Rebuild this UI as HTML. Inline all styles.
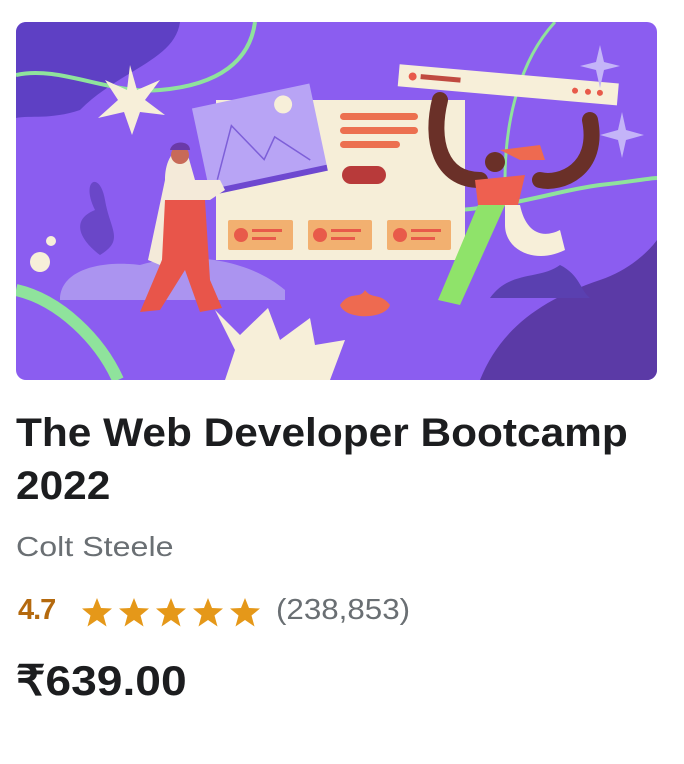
<!DOCTYPE html>
<html><head><meta charset="utf-8"><style>
html,body{margin:0;padding:0;background:#fff;width:684px;height:764px;overflow:hidden;font-family:"Liberation Sans",Arial,sans-serif}
.card{position:absolute;left:16px;top:22px;width:641px;height:358px;border-radius:10px;overflow:hidden}
.s{transform-origin:0 0;white-space:nowrap;position:absolute}
.t{left:16px;top:407px;font-size:40px;font-weight:bold;color:#1c1d1f;line-height:53px;transform:scaleX(1.06)}
.a{left:16px;top:531px;font-size:28px;color:#6a6f73;transform:scaleX(1.15)}
.p{left:16px;top:656px;font-size:42px;font-weight:bold;color:#1c1d1f;transform:scaleX(1.1)}
</style></head><body>
<div class="card">
<svg width="641" height="358" viewBox="16 22 641 358" xmlns="http://www.w3.org/2000/svg">
<rect x="16" y="22" width="641" height="358" fill="#8b5df0"/>
<path d="M16 22 H180 C175 60 120 70 80 110 C50 120 30 115 16 118Z" fill="#5e40c4"/>
<path d="M480 380 C500 330 540 300 600 280 C630 270 650 250 657 240 V380Z" fill="#5b3aa6"/>
<path d="M16 75 C60 65 110 95 160 90 C220 85 250 60 255 22" stroke="#8fe39c" stroke-width="4" fill="none"/>
<path d="M555 22 C520 60 505 120 505 180" stroke="#8fe39c" stroke-width="3" fill="none"/>
<path d="M460 210 C520 205 560 190 600 185 C630 182 650 178 657 178" stroke="#8fe39c" stroke-width="4" fill="none"/>
<path d="M16 290 C60 300 100 340 118 380" stroke="#8fe39c" stroke-width="12" fill="none"/>
<path d="M60 300 C60 270 100 260 140 265 C190 250 250 260 285 290 L285 300Z" fill="#ab94f0"/>
<path d="M95 210 C80 180 100 170 105 200 C110 230 125 240 100 255 C80 240 70 220 95 210Z" fill="#6a47c8"/>
<path d="M130 65 L137 90 L160 80 L145 100 L165 115 L140 112 L132 135 L124 112 L98 118 L118 100 L105 80 L127 90Z" fill="#f7efd9"/>
<circle cx="40" cy="262" r="10" fill="#f7efd9"/><circle cx="51" cy="241" r="5" fill="#f7efd9"/>
<rect x="216" y="100" width="249" height="160" fill="#f6eed8"/>
<g transform="rotate(-12 260 140)"><rect x="200" y="95" width="120" height="85" fill="#b8a4f5"/><rect x="200" y="178" width="120" height="6" fill="#6e48d0"/><path d="M210 170 L235 120 L260 160 L275 140 L305 170" stroke="#7d5fd8" fill="none" stroke-width="1.5"/><circle cx="290" cy="110" r="9" fill="#f7efd9"/></g>
<rect x="340" y="113" width="78" height="7" rx="3.5" fill="#ec7050"/>
<rect x="340" y="127" width="78" height="7" rx="3.5" fill="#ec7050"/>
<rect x="340" y="141" width="60" height="7" rx="3.5" fill="#ec7050"/>
<rect x="342" y="166" width="44" height="18" rx="9" fill="#b83a3a"/>
<g fill="#f2b070"><rect x="228" y="220" width="65" height="30" rx="2"/><rect x="308" y="220" width="64" height="30" rx="2"/><rect x="387" y="220" width="64" height="30" rx="2"/></g>
<g fill="#e85a4a"><circle cx="241" cy="235" r="7"/><circle cx="320" cy="235" r="7"/><circle cx="400" cy="235" r="7"/>
<rect x="252" y="229" width="30" height="3"/><rect x="252" y="237" width="24" height="3"/><rect x="331" y="229" width="30" height="3"/><rect x="331" y="237" width="24" height="3"/><rect x="411" y="229" width="30" height="3"/><rect x="411" y="237" width="24" height="3"/></g>
<path d="M215 310 L240 335 L268 308 L280 340 L310 318 L315 345 L345 340 L330 380 L225 380 L235 350Z" fill="#f7efd9"/>
<path d="M340 305 C350 290 360 300 365 290 C372 300 380 292 390 305 C385 320 345 320 340 305Z" fill="#ee6a50"/>
<g transform="rotate(5 510 88)"><rect x="398" y="74" width="220" height="22" fill="#f7efd9"/><circle cx="412" cy="85" r="4" fill="#e85a4a"/><rect x="420" y="82" width="40" height="5" fill="#c04a40"/><circle cx="575" cy="85" r="3" fill="#e85a4a"/><circle cx="588" cy="85" r="3" fill="#e85a4a"/><circle cx="600" cy="85" r="3" fill="#e85a4a"/></g>
<path d="M440 100 C430 140 440 180 480 180 M590 120 C600 170 560 185 540 180" stroke="#6a3028" stroke-width="16" fill="none" stroke-linecap="round"/>
<path d="M500 150 L540 145 L545 160 L520 160Z" fill="#ee6a50"/>
<path d="M475 180 L525 175 L518 205 L478 205Z" fill="#ee6050"/>
<circle cx="495" cy="162" r="10" fill="#6a3028"/>
<path d="M478 205 L505 205 L460 305 L438 300Z" fill="#8fe36a"/>
<path d="M505 205 L520 205 C525 230 540 240 560 230 L565 250 C535 265 505 250 505 225Z" fill="#f7efd9"/>
<path d="M185 145 C170 150 165 165 165 180 L148 260 L160 265 L185 200 L210 200 L225 190 L220 180 L195 180 Z" fill="#f4ead9"/>
<path d="M165 200 L205 200 L210 280 L222 308 L200 312 L185 270 L160 310 L140 312 L162 260Z" fill="#e8554a"/>
<circle cx="180" cy="155" r="9" fill="#c86a58"/><path d="M170 150 C172 140 190 140 190 150Z" fill="#6a3aa8"/>
<path d="M600 45 L604 62 L620 66 L604 70 L600 88 L596 70 L580 66 L596 62Z" fill="#c4b4f8"/>
<path d="M622 112 L626 130 L644 135 L626 140 L622 158 L618 140 L600 135 L618 130Z" fill="#c4b4f8"/>
<path d="M490 298 C510 270 540 280 560 265 C580 275 580 290 590 298Z" fill="#5a40b0"/>
</svg>
</div>
<div class="s t">The Web Developer Bootcamp<br>2022</div>
<div class="s a">Colt Steele</div>
<div class="s" style="left:18px;top:594px;font-size:29px;font-weight:bold;color:#b4690e;letter-spacing:-1px">4.7</div>
<svg style="position:absolute;left:82px;top:597px" width="186" height="32" viewBox="0 0 186 32">
<defs><path id="st" d="M15 1 L19 11 L30 11.5 L21.5 18.5 L24.5 29.5 L15 23 L5.5 29.5 L8.5 18.5 L0 11.5 L11 11Z" fill="#e59819"/></defs>
<use href="#st" x="0"/><use href="#st" x="37"/><use href="#st" x="74"/><use href="#st" x="111"/><use href="#st" x="148"/>
</svg>
<div class="s" style="left:276px;top:594px;font-size:29px;color:#6a6f73;transform:scaleX(1.08)">(238,853)</div>
<div class="s p">₹639.00</div>
</body></html>
